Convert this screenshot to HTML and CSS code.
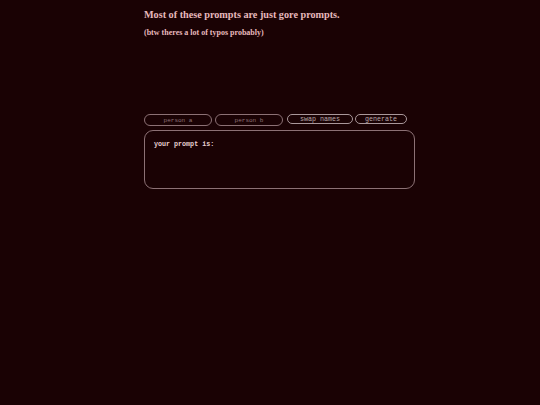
FILE: index.html
```html
<!DOCTYPE html>
<html>
<head>
<meta charset="utf-8">
<link rel="stylesheet" href="styles.css">
</head>
<body>
<div class="wrap">
  <h1 class="title">Most of these prompts are just gore prompts.</h1>
  <p class="sub">(btw theres a lot of typos probably)</p>
  <div class="controls">
    <input class="field" type="text" placeholder="person a">
    <input class="field" type="text" placeholder="person b">
    <button class="btn swap">swap names</button>
    <button class="btn gen">generate</button>
  </div>
  <div class="output">your prompt is:</div>
</div>
</body>
</html>
```
FILE: styles.css
```css
html, body {
  background: #1a0204;
  margin: 0;
  padding: 0;
}
.wrap {
  margin-left: 144px;
  width: 271px;
  padding-top: 8px;
}
.title {
  font-family: "Liberation Serif", serif;
  font-weight: bold;
  font-size: 10.2px;
  color: #e7b9bd;
  margin: 0;
  line-height: 13px;
}
.sub {
  font-family: "Liberation Serif", serif;
  font-weight: bold;
  font-size: 8px;
  color: #e7b9bd;
  margin: 7px 0 0 0;
  line-height: 10px;
}
.controls {
  display: flex;
  align-items: flex-start;
  gap: 3px;
  margin-top: 76px;
}
.field {
  box-sizing: border-box;
  width: 68px;
  height: 12px;
  border: 1px solid #8c7175;
  border-radius: 6px;
  background: #1a0204;
  font-family: "Liberation Mono", monospace;
  font-size: 6px;
  text-align: center;
  padding: 0;
  color: #9a8084;
  outline: none;
}
.field::placeholder { color: #8f7478; }
.btn {
  box-sizing: border-box;
  height: 10px;
  border: 1px solid #a9979a;
  border-radius: 5px;
  background: #1a0204;
  font-family: "Liberation Mono", monospace;
  font-size: 6.7px;
  line-height: 8px;
  color: #b7a5a8;
  padding: 0;
}
.swap { width: 66px; margin-left: 1px; }
.gen { width: 52px; margin-left: -1px; }
.output {
  box-sizing: border-box;
  margin-top: 4px;
  height: 59px;
  border: 1px solid #8c7175;
  border-radius: 9px;
  padding: 9px 0 0 9px;
  font-family: "Liberation Mono", monospace;
  font-weight: bold;
  font-size: 6.7px;
  color: #e7cfd1;
}
```
